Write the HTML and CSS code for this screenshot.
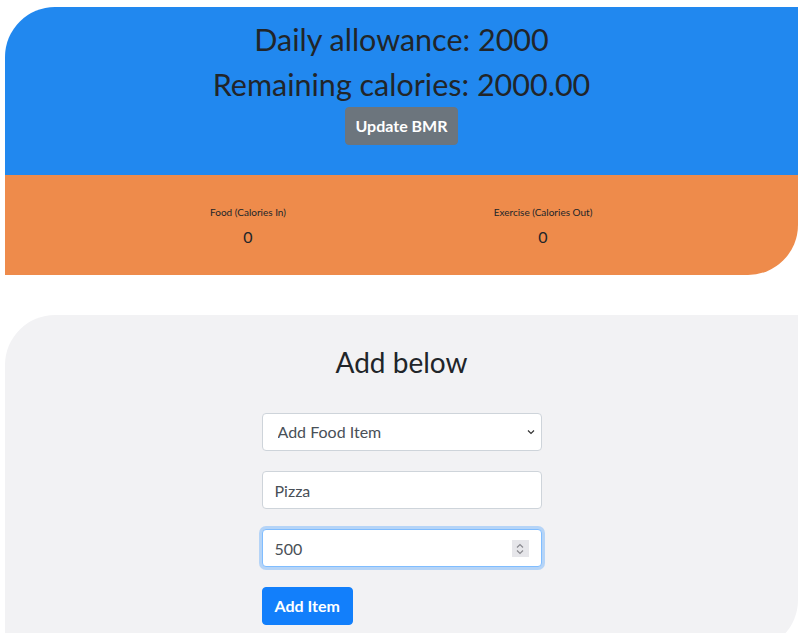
FILE: index.html
```html
<!DOCTYPE html>
<html lang="en">
<head>
<meta charset="utf-8">
<title>Calorie Tracker</title>
<link rel="stylesheet" href="styles.css">
</head>
<body>
  <section class="summary">
    <div class="summary-top">
      <h2 class="headline">Daily allowance: 2000</h2>
      <h2 class="headline headline-last">Remaining calories: 2000.00</h2>
      <button class="btn btn-secondary" type="button">Update BMR</button>
    </div>
    <div class="summary-bottom">
      <div class="stat">
        <div class="stat-label">Food (Calories In)</div>
        <div class="stat-value">0</div>
      </div>
      <div class="stat">
        <div class="stat-label">Exercise (Calories Out)</div>
        <div class="stat-value">0</div>
      </div>
    </div>
  </section>

  <section class="add-card">
    <h3 class="add-title">Add below</h3>
    <form class="add-form">
      <select class="form-control form-select">
        <option>Add Food Item</option>
        <option>Add Exercise Item</option>
      </select>
      <input class="form-control" type="text" value="Pizza">
      <div class="number-wrap">
        <input class="form-control is-focused" type="number" value="500">
        <span class="spinner">
          <svg width="10" height="14" viewBox="0 0 10 14"><path d="M2 5.5 L5 2.5 L8 5.5" fill="none" stroke="#8a8a90" stroke-width="1.2"/><path d="M2 8.5 L5 11.5 L8 8.5" fill="none" stroke="#8a8a90" stroke-width="1.2"/></svg>
        </span>
      </div>
      <div>
        <button class="btn btn-primary" type="button">Add Item</button>
      </div>
    </form>
  </section>
</body>
</html>
```

FILE: styles.css
```css
* { box-sizing: border-box; }

body {
  margin: 0;
  font-family: "Lato", "Noto Sans", sans-serif;
  color: #212529;
  background: #ffffff;
}

.summary {
  margin: 7px 2px 0 5px;
  border-radius: 50px 0 50px 0;
  overflow: hidden;
}

.summary-top {
  background: #2188ef;
  text-align: center;
  padding: 13px 0 30px;
}

.headline {
  font-size: 30.5px;
  font-weight: 400;
  line-height: 38px;
  margin: 0 0 7px;
}

.headline-last {
  margin-bottom: 4px;
}

.btn {
  font-family: inherit;
  font-size: 16px;
  font-weight: 700;
  line-height: 24px;
  padding: 6px 12px;
  border: 1px solid transparent;
  border-radius: 4px;
  color: #ffffff;
  cursor: pointer;
}

.btn-secondary {
  background: #6c757d;
  border-color: #6c757d;
  padding-left: 9px;
  padding-right: 9px;
}

.btn-primary {
  background: #127ffb;
  border-color: #127ffb;
}

.summary-bottom {
  background: #ee8b4b;
  height: 100px;
  display: grid;
  grid-template-columns: 295px 295px;
  justify-content: center;
  padding: 30px 12px 0 0;
}

.stat {
  text-align: center;
}

.stat-label {
  font-size: 10px;
  line-height: 15px;
}

.stat-value {
  font-size: 16px;
  line-height: 24px;
  margin-top: 5px;
}

.add-card {
  margin: 40px 2px 0 5px;
  background: #f2f2f4;
  border-radius: 50px 0 50px 0;
  padding: 30px 0 25px;
}

.add-title {
  text-align: center;
  font-size: 28px;
  font-weight: 400;
  line-height: 34px;
  margin: 0 0 34px;
}

.add-form {
  width: 280px;
  margin: 0 auto;
  display: flex;
  flex-direction: column;
  gap: 20px;
}

.form-control {
  display: block;
  width: 100%;
  height: 38px;
  padding: 6px 12px;
  font-family: inherit;
  font-size: 16px;
  line-height: 24px;
  color: #495057;
  background: #ffffff;
  border: 1px solid #ced4da;
  border-radius: 4px;
  outline: none;
}

.form-select {
  appearance: none;
  -webkit-appearance: none;
  padding-left: 15px;
  background-image: url("data:image/svg+xml;utf8,<svg xmlns='http://www.w3.org/2000/svg' width='8' height='6' viewBox='0 0 8 6'><path d='M1 1.5 L4 4.5 L7 1.5' fill='none' stroke='%23333' stroke-width='1.2'/></svg>");
  background-repeat: no-repeat;
  background-position: right 6px center;
}

.is-focused {
  border-color: #80bdff;
  box-shadow: 0 0 0 3px rgba(0, 123, 255, 0.25);
}

.number-wrap {
  position: relative;
}

input[type=number]::-webkit-inner-spin-button,
input[type=number]::-webkit-outer-spin-button {
  -webkit-appearance: none;
  margin: 0;
}

.spinner {
  position: absolute;
  right: 13px;
  top: 11px;
  width: 17px;
  height: 17px;
  background: #e6e6ea;
  display: flex;
  align-items: center;
  justify-content: center;
}
```
